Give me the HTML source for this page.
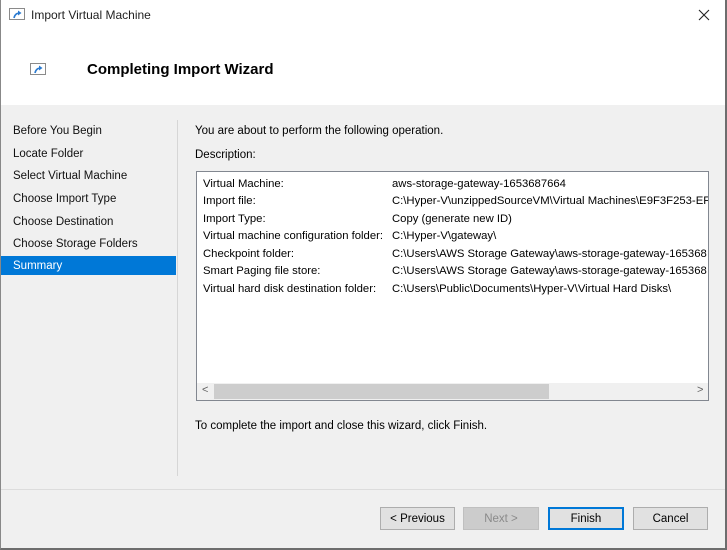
<!DOCTYPE html>
<html><head><meta charset="utf-8"><style>
*{margin:0;padding:0;box-sizing:border-box}
body{width:727px;height:550px;overflow:hidden;background:#fff;font-family:"Liberation Sans",sans-serif;font-size:11.5px;color:#000;position:relative}
.abs{position:absolute}
.frame{left:0;top:0;width:727px;height:550px;border-left:1px solid #888;border-right:2px solid #6d6d6d;border-bottom:2px solid #6d6d6d}
.icon{width:16px;height:12px;border:1px solid #8a8a8a;background:#fff}
.icon svg{position:absolute;left:3px;top:1px}
.gray{left:1px;top:105px;width:724px;height:443px;background:#f0f0f0}
.nav div{position:absolute;left:13px;font-size:11.5px;color:#111}
.btn{height:23px;border:1px solid #adadad;background:#e1e1e1;text-align:center;line-height:22px;font-size:11.5px}
.row{position:absolute;left:6px;white-space:nowrap;font-size:11.3px}
.val{position:absolute;left:195px;white-space:nowrap;font-size:11.3px}
</style></head><body>
<div class="abs" style="left:1px;top:0;width:724px;height:105px;background:#fff"></div>
<div class="abs icon" style="left:9px;top:8px"><svg width="10" height="9" viewBox="0 0 10 9"><path d="M1 8 Q2 3 7 3" stroke="#2a7ad0" stroke-width="1.6" fill="none"/><path d="M5 0.5 L8.5 3 L5 5.5Z" fill="#2a7ad0"/></svg></div>
<div class="abs" style="left:31px;top:8px;font-size:12px;color:#222">Import Virtual Machine</div>
<svg class="abs" style="left:698px;top:9px" width="12" height="12" viewBox="0 0 12 12"><path d="M1 1L11 11M11 1L1 11" stroke="#222" stroke-width="1.1"/></svg>
<div class="abs icon" style="left:30px;top:63px"><svg width="10" height="9" viewBox="0 0 10 9"><path d="M1 8 Q2 3 7 3" stroke="#2a7ad0" stroke-width="1.6" fill="none"/><path d="M5 0.5 L8.5 3 L5 5.5Z" fill="#2a7ad0"/></svg></div>
<div class="abs" style="left:87px;top:61px;font-size:15px;font-weight:bold">Completing Import Wizard</div>
<div class="abs gray"></div>
<div class="abs" style="left:1px;top:256px;width:175px;height:19px;background:#0078d7"></div>
<div class="nav">
<div style="top:125px">Before You Begin</div>
<div style="top:148px">Locate Folder</div>
<div style="top:170px">Select Virtual Machine</div>
<div style="top:193px">Choose Import Type</div>
<div style="top:216px">Choose Destination</div>
<div style="top:238px">Choose Storage Folders</div>
<div style="top:260px;color:#fff">Summary</div>
</div>
<div class="abs" style="left:177px;top:120px;width:1px;height:356px;background:#d6d6d6"></div>
<div class="abs" style="left:195px;top:125px">You are about to perform the following operation.</div>
<div class="abs" style="left:195px;top:149px">Description:</div>
<div class="abs" style="left:196px;top:171px;width:513px;height:230px;background:#fff;border:1px solid #828790;overflow:hidden">
<div class="row" style="top:6px">Virtual Machine:</div><div class="val" style="top:6px">aws-storage-gateway-1653687664</div>
<div class="row" style="top:23px">Import file:</div><div class="val" style="top:23px">C:\Hyper-V\unzippedSourceVM\Virtual Machines\E9F3F253-EFC</div>
<div class="row" style="top:41px">Import Type:</div><div class="val" style="top:41px">Copy (generate new ID)</div>
<div class="row" style="top:58px">Virtual machine configuration folder:</div><div class="val" style="top:58px">C:\Hyper-V\gateway\</div>
<div class="row" style="top:76px">Checkpoint folder:</div><div class="val" style="top:76px">C:\Users\AWS Storage Gateway\aws-storage-gateway-165368</div>
<div class="row" style="top:93px">Smart Paging file store:</div><div class="val" style="top:93px">C:\Users\AWS Storage Gateway\aws-storage-gateway-165368</div>
<div class="row" style="top:111px">Virtual hard disk destination folder:</div><div class="val" style="top:111px">C:\Users\Public\Documents\Hyper-V\Virtual Hard Disks\</div>
<div class="abs" style="left:0;top:211px;width:511px;height:17px;background:#f0f0f0"></div>
<div class="abs" style="left:17px;top:212px;width:335px;height:15px;background:#cdcdcd"></div>
<div class="abs" style="left:5px;top:212px;font-size:11px;color:#606060">&lt;</div>
<div class="abs" style="left:500px;top:212px;font-size:11px;color:#606060">&gt;</div>
</div>
<div class="abs" style="left:195px;top:420px">To complete the import and close this wizard, click Finish.</div>
<div class="abs" style="left:1px;top:489px;width:724px;height:1px;background:#dcdcdc"></div>
<div class="abs btn" style="left:380px;top:507px;width:75px">&lt; Previous</div>
<div class="abs btn" style="left:463px;top:507px;width:76px;background:#cccccc;border-color:#bfbfbf;color:#8a8a8a">Next &gt;</div>
<div class="abs btn" style="left:548px;top:507px;width:76px;border:2px solid #0078d7;line-height:20px">Finish</div>
<div class="abs btn" style="left:633px;top:507px;width:75px">Cancel</div>
<div class="abs frame"></div>
</body></html>
